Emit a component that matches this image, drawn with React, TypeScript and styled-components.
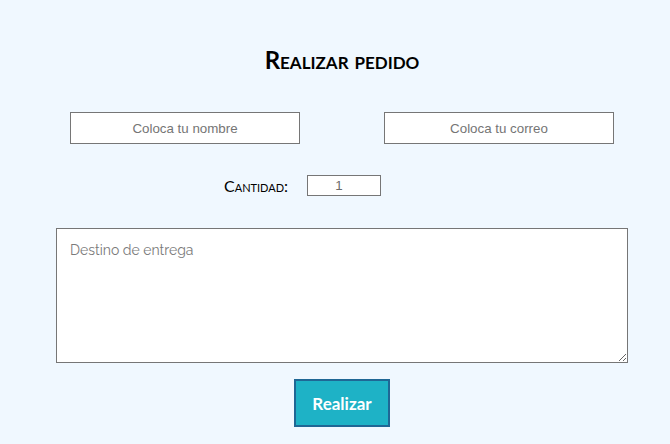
import React from "react";
import styled, { createGlobalStyle } from "styled-components";

const Global = createGlobalStyle`
  html, body { margin: 0; padding: 0; background: #f0f8ff; }
  body { font-family: "Lato", "Liberation Sans", sans-serif; }
`;

const Page = styled.form`
  box-sizing: border-box;
  width: 670px;
  height: 444px;
  padding: 0 0 0 14px;
  display: flex;
  flex-direction: column;
  align-items: center;
`;

const Title = styled.h1`
  margin: 45px 0 0;
  font-family: "Lato", sans-serif;
  font-size: 24px;
  font-weight: 700;
  font-variant: small-caps;
  line-height: 30px;
  color: #000;
`;

const Pair = styled.div`
  margin-top: 37px;
  display: flex;
  gap: 84px;
`;

const TextInput = styled.input`
  box-sizing: border-box;
  width: 230px;
  height: 32px;
  border: 1px solid #767676;
  background: #fff;
  font-family: "Liberation Sans", Arial, sans-serif;
  font-size: 13.33px;
  text-align: center;
  &::placeholder { color: #757575; }
`;

const QtyRow = styled.div`
  margin-top: 31px;
  align-self: flex-start;
  margin-left: 210px;
  display: flex;
  align-items: center;
  gap: 19px;
`;

const QtyLabel = styled.label`
  font-family: "Lato", sans-serif;
  font-size: 16px;
  font-variant: small-caps;
  color: #000;
`;

const QtyInput = styled.input`
  box-sizing: border-box;
  width: 74px;
  height: 21px;
  border: 1px solid #767676;
  background: #fff;
  font-family: "Liberation Sans", Arial, sans-serif;
  font-size: 13.33px;
  color: #6b6b6b;
  text-align: center;
  padding: 0 10px 0 0;
`;

const Area = styled.textarea`
  box-sizing: border-box;
  margin-top: 32px;
  width: 572px;
  height: 135px;
  border: 1px solid #767676;
  background: #fff;
  padding: 13px 13px;
  font-family: "Raleway", "Open Sans", sans-serif;
  font-size: 14px;
  resize: both;
  &::placeholder { color: #7a7a7a; }
`;

const Submit = styled.button`
  box-sizing: border-box;
  margin-top: 16px;
  width: 96px;
  height: 48px;
  background: #1eb2c6;
  border: 2px solid #1f6795;
  color: #fff;
  font-family: "Lato", sans-serif;
  font-weight: 700;
  font-size: 17px;
  cursor: pointer;
`;

export default function App() {
  return (
    <>
      <Global />
      <Page onSubmit={(e) => e.preventDefault()}>
        <Title>Realizar pedido</Title>
        <Pair>
          <TextInput placeholder="Coloca tu nombre" />
          <TextInput placeholder="Coloca tu correo" />
        </Pair>
        <QtyRow>
          <QtyLabel>Cantidad:</QtyLabel>
          <QtyInput type="text" defaultValue="1" />
        </QtyRow>
        <Area placeholder="Destino de entrega" />
        <Submit type="submit">Realizar</Submit>
      </Page>
    </>
  );
}
